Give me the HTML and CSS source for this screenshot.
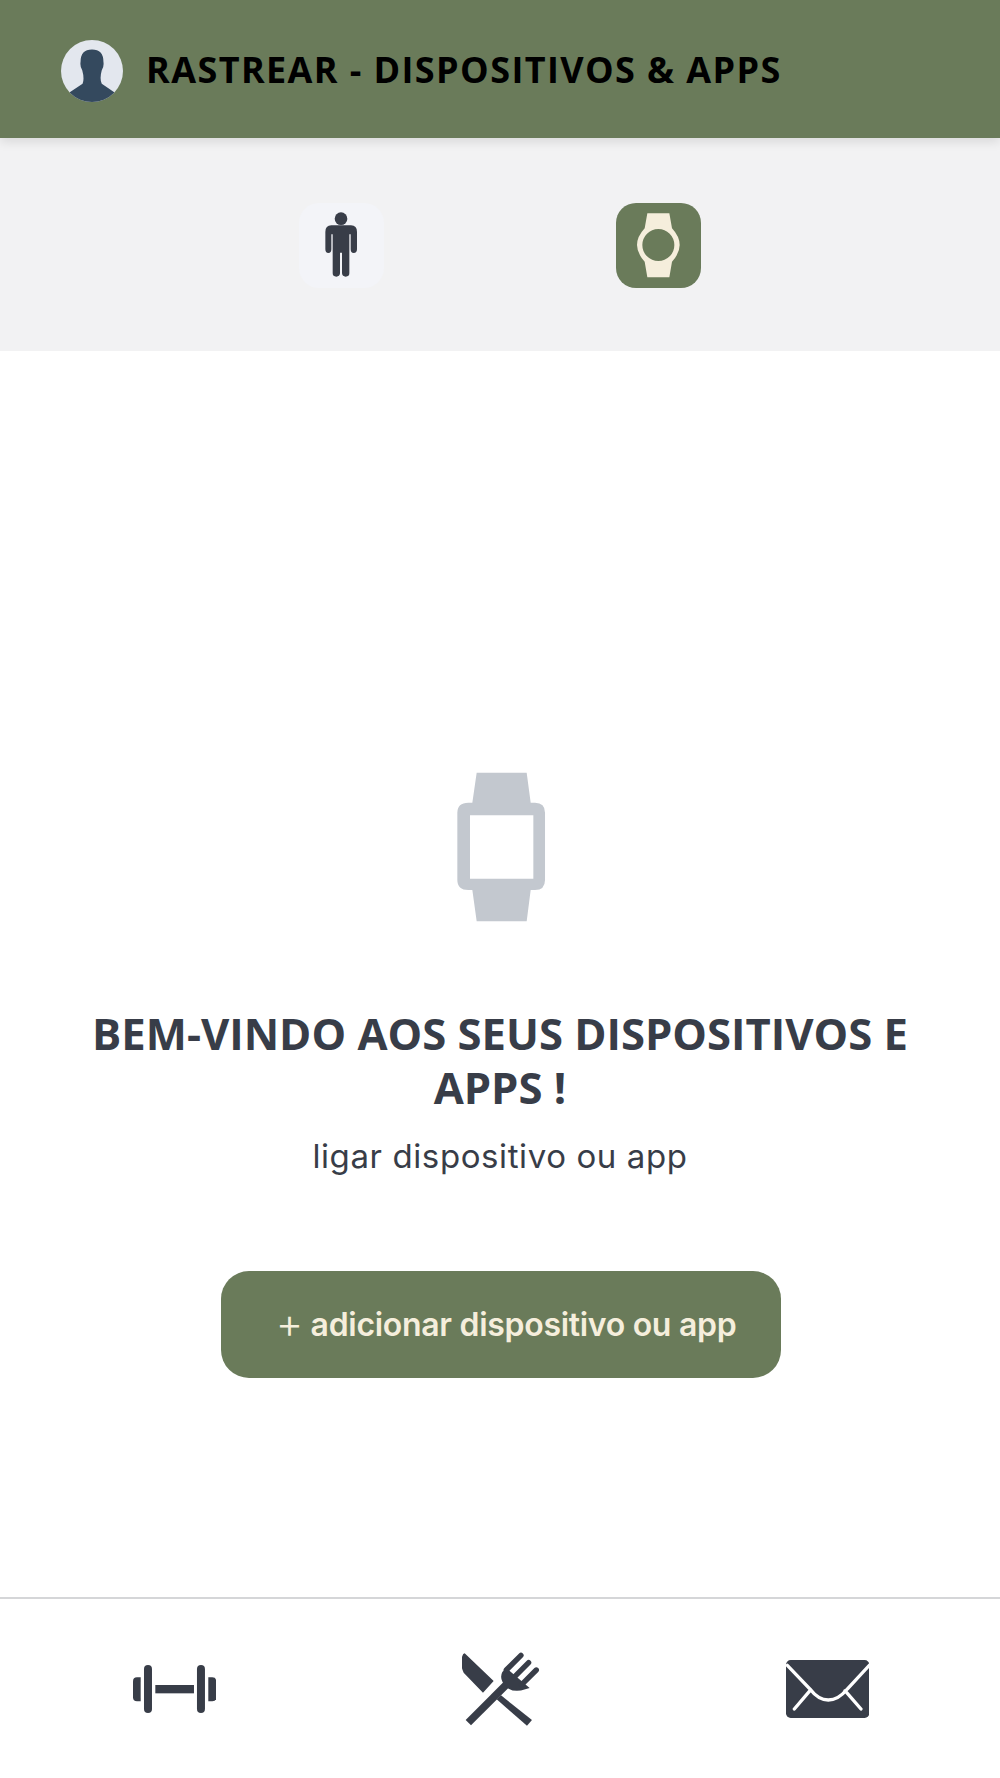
FILE: index.html
```html
<!DOCTYPE html>
<html lang="pt">
<head>
<meta charset="utf-8">
<title>Rastrear</title>
<link rel="stylesheet" href="styles.css">
</head>
<body>
<div class="app">
  <header class="topbar">
    <svg class="avatar" viewBox="34 30 184 184">
      <defs><clipPath id="av"><circle cx="126" cy="122" r="92"/></clipPath></defs>
      <circle cx="126" cy="122" r="92" fill="#e3e7ee"/>
      <path clip-path="url(#av)" fill="#34495e" d="M126 58Q160 58 160 95Q162 110 155 120Q148 145 155 160L192 185V230H60V185L98 160Q104 145 97 120Q90 110 92 95Q92 58 126 58Z"/>
    </svg>
    <h1 class="topbar-title">RASTREAR - DISPOSITIVOS &amp; APPS</h1>
  </header>
  <nav class="tabs">
    <div class="tab">
      <svg class="icon-person" viewBox="130 65 110 205">
        <circle cx="184" cy="88" r="19"/>
        <path d="M155 108H214Q232 108 232 128V180Q232 191 222 191Q213 191 213 180V135H209V252Q209 262 198 262Q188 262 187 252V190H181V252Q180 262 170 262Q159 262 159 252V135H155V180Q155 191 146 191Q137 191 137 180V128Q137 108 155 108Z"/>
      </svg>
    </div>
    <div class="tab tab-active">
      <svg class="icon-round-watch" viewBox="1065 60 140 212">
        <path fill-rule="evenodd" d="M1102 70H1168L1176 115Q1199 140 1199 165Q1199 190 1176 215L1168 262H1102L1094 215Q1071 190 1071 165Q1071 140 1094 115ZM1135 117A48 48 0 1 0 1135 213A48 48 0 1 0 1135 117Z"/>
      </svg>
    </div>
  </nav>
  <main class="content">
    <svg class="icon-watch" viewBox="105 65 275 455">
      <path fill-rule="evenodd" d="M170 70H320L332 160H345Q375 160 375 190V392Q375 422 345 422H332L320 516H170L157 422H145Q112 422 112 392V190Q112 160 145 160H157ZM150 198V388H340V198Z"/>
    </svg>
    <h2 class="welcome">BEM-VINDO AOS SEUS DISPOSITIVOS E APPS !</h2>
    <p class="lead">ligar dispositivo ou app</p>
    <button class="add-btn" type="button"><span class="plus">+</span> adicionar dispositivo ou app</button>
  </main>
  <footer class="bottom-nav">
    <svg class="icon-dumbbell" viewBox="100 103 250 144">
      <path d="M112 140H123V212H112Q100 212 100 200V152Q100 140 112 140Z"/>
      <rect x="133" y="103" width="24" height="144" rx="12"/>
      <rect x="167" y="163" width="116" height="25"/>
      <rect x="292" y="103" width="24" height="144" rx="12"/>
      <path d="M326 140H338Q350 140 350 152V200Q350 212 338 212H326Z"/>
    </svg>
    <svg class="icon-cutlery" viewBox="95 65 235 225">
      <path d="M103 72L190 155L158 190L100 130Q88 105 96 80Q98 72 103 72Z"/>
      <path d="M212 198L305 272L290 289L199 210Z"/>
      <path d="M106 272L222 156L238 172L122 288Z"/>
      <path d="M216 128L228 116L298 176L285 180Q255 190 235 178L228 172Q205 150 216 128Z"/>
      <g class="tines">
        <path d="M228 122L272 78"/>
        <path d="M251 144L295 100"/>
        <path d="M274 166L318 122"/>
      </g>
    </svg>
    <svg class="icon-mail" viewBox="78 88 250 174">
      <rect x="78" y="88" width="250" height="174" rx="14"/>
      <path class="flap" d="M82 104L150 175Q175 208 205 208Q235 208 262 175L328 104M150 180L103 235M255 180L303 235"/>
    </svg>
  </footer>
</div>
</body>
</html>
```

FILE: styles.css
```css
* { box-sizing: border-box; }
html, body { margin: 0; padding: 0; background: #fff; }
.app { width: 1000px; height: 1778px; display: flex; flex-direction: column; color: #383d48; }

.topbar {
  height: 138px; flex: none; display: flex; align-items: center; gap: 23px;
  padding: 4px 0 0 61px; background: #6a7b5a; position: relative; z-index: 1;
  box-shadow: 0 4px 10px rgba(0, 0, 0, .1);
}
.avatar { width: 62px; height: 62px; flex: none; }
.topbar-title { margin: 0 0 3px; font: 700 36px/1 "Open Sans", sans-serif; color: #000; letter-spacing: 1.4px; white-space: nowrap; }

.tabs { height: 213px; flex: none; background: #f2f2f3; display: flex; justify-content: center; align-items: flex-start; gap: 232px; padding-top: 65px; }
.tab { width: 85px; height: 85px; border-radius: 20px; background: #f3f4f8; display: flex; align-items: center; justify-content: center; }
.tab-active { background: #6a7b5a; }
.icon-person { width: 36.7px; height: 68.3px; fill: #383d48; }
.icon-round-watch { width: 46.7px; height: 70.7px; fill: #f5eedc; }

.content { flex: 1; display: flex; flex-direction: column; align-items: center; padding-top: 420px; }
.icon-watch { width: 91.7px; height: 151.7px; fill: #c3c8cf; flex: none; margin-left: 1px; }
.welcome { margin: 83px 0 0; width: 860px; text-align: center; font: 700 43.6px/54px "Open Sans", sans-serif; color: #383d48; }
.lead { margin: 22px 0 0; font: 400 33px/40px Inter, sans-serif; letter-spacing: .6px; color: #383d48; }
.add-btn {
  margin: 95px 0 0 2px; width: 560px; height: 107px; border: 0; border-radius: 28px; background: #6a7b5a; color: #f5eedc;
  font: 600 32px/1 Inter, sans-serif; padding: 0 0 0 10px; letter-spacing: -.3px;
}
.plus { font-weight: 300; font-size: 42px; vertical-align: -2px; line-height: 32px; }

.bottom-nav { height: 181px; flex: none; border-top: 2px solid #d5d6d8; display: flex; justify-content: space-between; align-items: center; padding: 0 131px 0 133px; }
.icon-dumbbell { width: 83.3px; height: 48px; fill: #383d48; }
.icon-cutlery { width: 78.3px; height: 75px; fill: #383d48; }
.tines path { fill: none; stroke: #383d48; stroke-width: 16; stroke-linecap: round; }
.icon-mail { width: 83.3px; height: 58px; fill: #383d48; }
.flap { fill: none; stroke: #fff; stroke-width: 10; stroke-linecap: round; }
```
